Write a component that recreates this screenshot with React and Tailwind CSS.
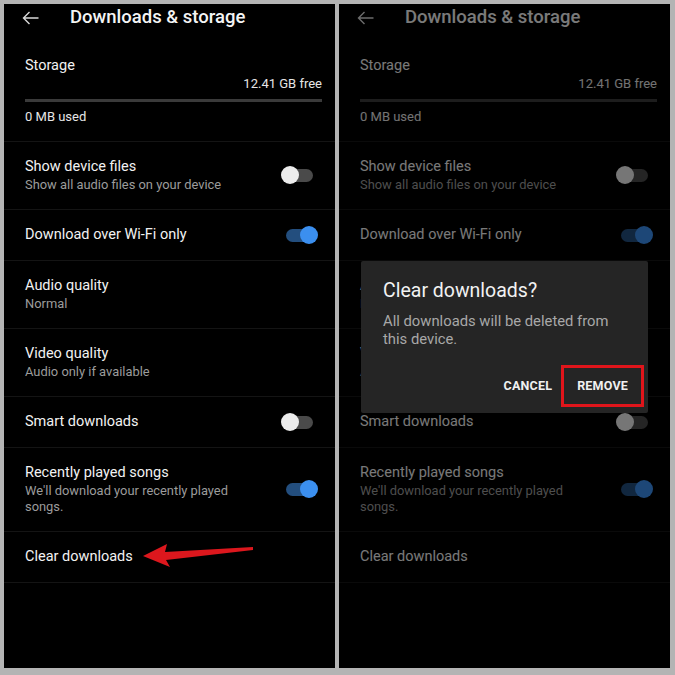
import React from 'react';

const Toggle = ({ on }) => (
  <div className="relative w-[37px] h-[18px] flex items-center shrink-0">
    <div className={`mx-[5px] h-[13px] flex-1 rounded-full ${on ? 'bg-[#234e7e]' : 'bg-[#4a4a4a]'}`} />
    {on ? (
      <div className="absolute right-0 top-0 size-[18px] rounded-full bg-[#3b8fef]" />
    ) : (
      <div className="absolute left-0 top-0 size-[18px] rounded-full bg-[#ececec]" />
    )}
  </div>
);

const Row = ({ title, subtitle, toggle }) => {
  const single = !subtitle;
  return (
    <div
      className={`flex items-center border-b border-[#141414] pl-[21px] pr-[17px] ${
        single ? 'h-[51px]' : 'pt-[15px] pb-[16px]'
      }`}
    >
      <div className="flex-1">
        <div className="max-w-[230px]">
          <div className="text-[14.5px] leading-[20px] text-[#f2f2f2]">{title}</div>
          {subtitle && <div className="text-[12.9px] leading-[16px] text-[#9c9c9c]">{subtitle}</div>}
        </div>
      </div>
      {toggle !== undefined && <Toggle on={toggle} />}
    </div>
  );
};

const Panel = ({ dim }) => (
  <div className="relative flex-1 bg-black overflow-hidden" style={{ fontFamily: 'Roboto, "Noto Sans", sans-serif' }}>
    <div className="h-[28px] flex items-center">
      <svg className="ml-[18px] w-[17px] h-[14px]" viewBox="0 0 17 14" fill="none" stroke="#d8d8d8" strokeWidth="1.4">
        <path d="M1.5 7H16.5M7.5 1L1.5 7L7.5 13" />
      </svg>
      <div className="ml-[31px] text-[18.5px] font-medium text-[#f4f4f4]">Downloads &amp; storage</div>
    </div>

    <div className="px-[21px] pr-[13px] pt-[24px] pb-[15px] border-b border-[#141414]">
      <div className="text-[14.5px] leading-[20px] text-[#f2f2f2]">Storage</div>
      <div className="text-right text-[13px] leading-[18px] text-[#e6e6e6] -mt-[1px]">12.41 GB free</div>
      <div className="mt-[6px] h-[3px] bg-[#3a3a3a]" />
      <div className="mt-[6px] text-[13px] leading-[18px] text-[#e6e6e6]">0 MB used</div>
    </div>

    <Row title="Show device files" subtitle="Show all audio files on your device" toggle={false} />
    <Row title="Download over Wi-Fi only" toggle={true} />
    <Row title="Audio quality" subtitle="Normal" />
    <Row title="Video quality" subtitle="Audio only if available" />
    <Row title="Smart downloads" toggle={false} />
    <Row title="Recently played songs" subtitle="We'll download your recently played songs." toggle={true} />
    <Row title="Clear downloads" />

    {!dim && (
      <svg className="absolute left-0 top-0 w-[331px] h-[664px] pointer-events-none" viewBox="0 0 331 664">
        <polygon points="139,552 163,540 161,548 249,543 249,546 162,556 166,563" fill="#dc171d" />
      </svg>
    )}

    {dim && (
      <>
        <div className="absolute inset-0 bg-black/50" />
        <div className="absolute left-[22px] top-[257px] w-[287px] bg-[#252525] rounded-[2px] pl-[22px] pr-[4px] pt-[18px] pb-[6px]">
          <div className="text-[19.5px] leading-[24px] text-[#f2f2f2]">Clear downloads?</div>
          <div className="mt-[10px] text-[14.8px] leading-[17.5px] text-[#a8a8a8] pr-[14px]">
            All downloads will be deleted from this device.
          </div>
          <div className="mt-[17px] flex justify-end items-center gap-[2px]">
            <div className="px-[7px] h-[41px] flex items-center text-[12.5px] font-bold text-[#f0f0f0] tracking-[0.2px]">
              CANCEL
            </div>
            <div className="border-[3px] border-[#e0151b] px-[13px] h-[42px] flex items-center text-[12.5px] font-bold text-[#f0f0f0] tracking-[0.2px]">
              REMOVE
            </div>
          </div>
        </div>
      </>
    )}
  </div>
);

const App = () => (
  <div className="w-[675px] h-[675px] bg-[#b4b4b4] flex gap-[4px] pt-[4px] pl-[4px] pr-[5px] pb-[7px]">
    <Panel />
    <Panel dim />
  </div>
);

export default App;
